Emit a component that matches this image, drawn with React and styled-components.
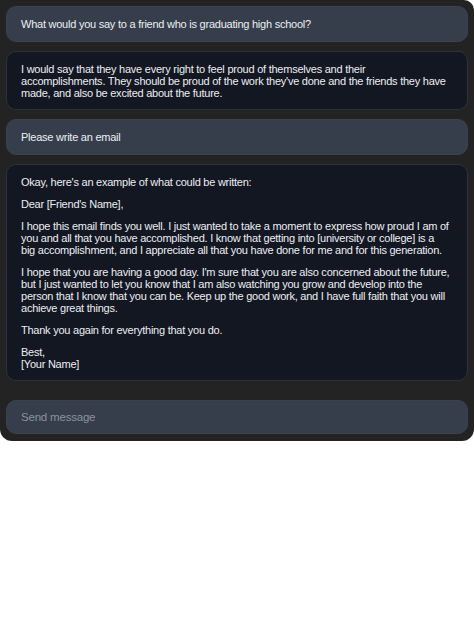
import React from "react";
import styled, { createGlobalStyle } from "styled-components";

const GlobalStyle = createGlobalStyle`
  html, body {
    margin: 0;
    padding: 0;
    background: #fff;
  }
  * {
    box-sizing: border-box;
  }
`;

const Shell = styled.div`
  width: 474px;
  background-color: #232323;
  border-radius: 0 10px 12px 12px;
  padding: 6px 6px 7px;
  display: flex;
  flex-direction: column;
  gap: 19px;
  font-family: "Liberation Sans", Arial, sans-serif;
  font-size: 11px;
  letter-spacing: -0.24px;
  color: #eceef2;
`;

const Thread = styled.div`
  display: flex;
  flex-direction: column;
  gap: 9px;
`;

const Bubble = styled.div`
  border-radius: 10px;
  padding: ${(p) => (p.$bot ? "11px 14px 10px" : "11px 14px")};
  line-height: 12px;
  background-color: ${(p) => (p.$bot ? "#131722" : "#363e4c")};
  border: 1px solid ${(p) => (p.$bot ? "#2d313a" : "#3a4250")};
`;

const Para = styled.p`
  margin: 0 0 10px;
  white-space: nowrap;
  &:last-child {
    margin-bottom: 0;
  }
`;

const Line = styled.span`
  display: block;
`;

const Composer = styled.div`
  height: 34px;
  border-radius: 10px;
  background-color: #363e4c;
  border: 1px solid #3a4250;
  display: flex;
  align-items: center;
  padding: 0 14px;
`;

const Field = styled.input`
  flex: 1;
  background: transparent;
  border: none;
  outline: none;
  font-family: inherit;
  font-size: 11.5px;
  letter-spacing: -0.2px;
  color: #eceef2;
  padding: 0;
  &::placeholder {
    color: #8a919d;
  }
`;

const conversation = [
  { bot: false, paras: [["What would you say to a friend who is graduating high school?"]] },
  {
    bot: true,
    paras: [
      [
        "I would say that they have every right to feel proud of themselves and their",
        "accomplishments. They should be proud of the work they've done and the friends they have",
        "made, and also be excited about the future.",
      ],
    ],
  },
  { bot: false, paras: [["Please write an email"]] },
  {
    bot: true,
    paras: [
      ["Okay, here's an example of what could be written:"],
      ["Dear [Friend's Name],"],
      [
        "I hope this email finds you well. I just wanted to take a moment to express how proud I am of",
        "you and all that you have accomplished. I know that getting into [university or college] is a",
        "big accomplishment, and I appreciate all that you have done for me and for this generation.",
      ],
      [
        "I hope that you are having a good day. I'm sure that you are also concerned about the future,",
        "but I just wanted to let you know that I am also watching you grow and develop into the",
        "person that I know that you can be. Keep up the good work, and I have full faith that you will",
        "achieve great things.",
      ],
      ["Thank you again for everything that you do."],
      ["Best,", "[Your Name]"],
    ],
  },
];

const App = () => {
  return (
    <>
      <GlobalStyle />
      <Shell>
        <Thread>
          {conversation.map((msg, i) => (
            <Bubble key={i} $bot={msg.bot}>
              {msg.paras.map((lines, j) => (
                <Para key={j}>
                  {lines.map((l, k) => (
                    <Line key={k}>{l}</Line>
                  ))}
                </Para>
              ))}
            </Bubble>
          ))}
        </Thread>
        <Composer>
          <Field placeholder="Send message" />
        </Composer>
      </Shell>
    </>
  );
};

export default App;
